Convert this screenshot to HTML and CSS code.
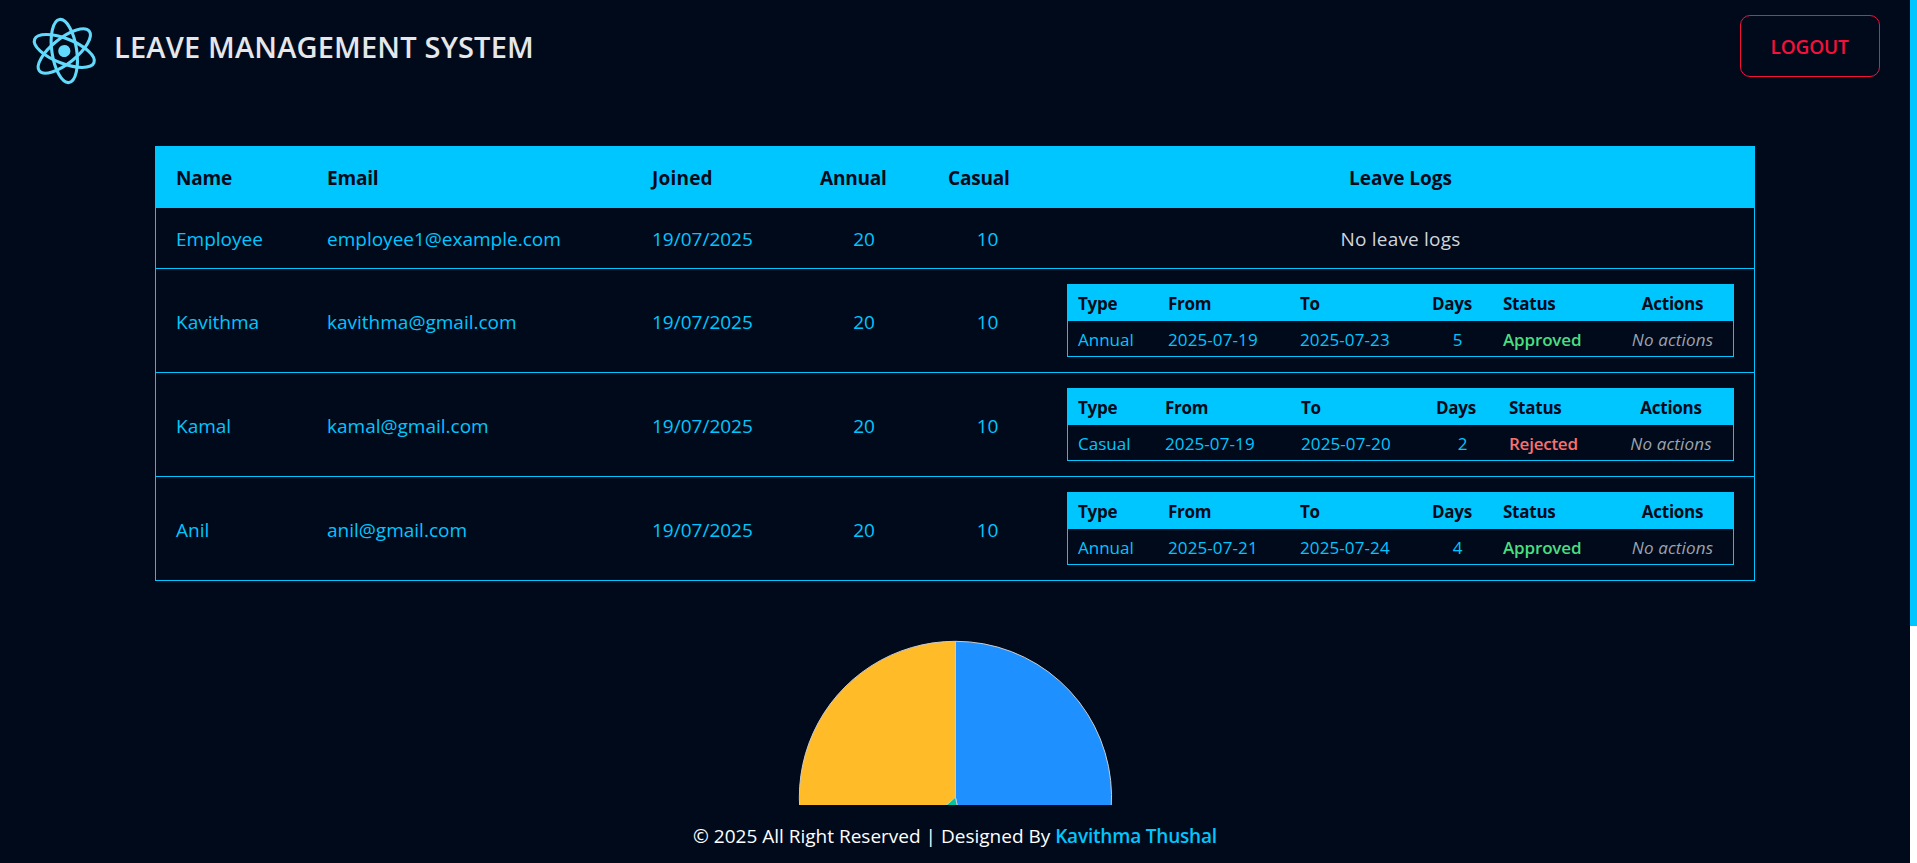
FILE: index.html
```html
<!DOCTYPE html>
<html lang="en">
<head>
<meta charset="utf-8">
<title>Leave Management System</title>
<link rel="stylesheet" href="styles.css">
</head>
<body>
<div class="page">
  <header class="topbar">
    <div class="brand">
      <svg class="logo" width="70" height="70" viewBox="-35.3 -35 70 70">
        <g transform="rotate(21.5)" fill="none" stroke="#61dafb" stroke-width="3.1">
          <circle r="6.1" fill="#61dafb" stroke="none"/>
          <ellipse rx="31.9" ry="12.4"/>
          <ellipse rx="31.9" ry="12.4" transform="rotate(60)"/>
          <ellipse rx="31.9" ry="12.4" transform="rotate(120)"/>
        </g>
      </svg>
      <h1 class="title">LEAVE MANAGEMENT SYSTEM</h1>
    </div>
    <button class="logout">LOGOUT</button>
  </header>

  <main class="content">
    <table class="employees">
      <colgroup><col class="c-name"><col class="c-email"><col class="c-joined"><col class="c-annual"><col class="c-casual"><col></colgroup>
      <thead>
        <tr><th>Name</th><th>Email</th><th class="joined">Joined</th><th>Annual</th><th>Casual</th><th class="center">Leave Logs</th></tr>
      </thead>
      <tbody>
        <tr class="short"><td>Employee</td><td>employee1@example.com</td><td>19/07/2025</td><td class="center">20</td><td class="center">10</td><td class="center empty">No leave logs</td></tr>
        <tr><td>Kavithma</td><td>kavithma@gmail.com</td><td>19/07/2025</td><td class="center">20</td><td class="center">10</td>
          <td class="logs-cell"><table class="logs annual">
            <colgroup><col class="l-type"><col class="l-from"><col class="l-to"><col class="l-days"><col class="l-status"><col></colgroup>
            <thead><tr><th>Type</th><th>From</th><th>To</th><th>Days</th><th>Status</th><th class="center">Actions</th></tr></thead>
            <tbody><tr><td>Annual</td><td class="date">2025-07-19</td><td class="date">2025-07-23</td><td class="center">5</td><td class="approved">Approved</td><td class="center none">No actions</td></tr></tbody>
          </table></td></tr>
        <tr><td>Kamal</td><td>kamal@gmail.com</td><td>19/07/2025</td><td class="center">20</td><td class="center">10</td>
          <td class="logs-cell"><table class="logs casual">
            <colgroup><col class="l-type"><col class="l-from"><col class="l-to"><col class="l-days"><col class="l-status"><col></colgroup>
            <thead><tr><th>Type</th><th>From</th><th>To</th><th>Days</th><th>Status</th><th class="center">Actions</th></tr></thead>
            <tbody><tr><td>Casual</td><td class="date">2025-07-19</td><td class="date">2025-07-20</td><td class="center">2</td><td class="rejected">Rejected</td><td class="center none">No actions</td></tr></tbody>
          </table></td></tr>
        <tr class="last"><td>Anil</td><td>anil@gmail.com</td><td>19/07/2025</td><td class="center">20</td><td class="center">10</td>
          <td class="logs-cell"><table class="logs annual">
            <colgroup><col class="l-type"><col class="l-from"><col class="l-to"><col class="l-days"><col class="l-status"><col></colgroup>
            <thead><tr><th>Type</th><th>From</th><th>To</th><th>Days</th><th>Status</th><th class="center">Actions</th></tr></thead>
            <tbody><tr><td>Annual</td><td class="date">2025-07-21</td><td class="date">2025-07-24</td><td class="center">4</td><td class="approved">Approved</td><td class="center none">No actions</td></tr></tbody>
          </table></td></tr>
      </tbody>
    </table>

    <svg class="chart" width="320" height="168" viewBox="795.1 637 320 168">
      <g stroke="#ccc" stroke-width="1">
        <path fill="#1e90ff" d="M955.5 797.3V641.3A156 156 0 0 1 989 949.7Z"/>
        <path fill="#ffbb28" d="M955.5 797.3L838 900A156 156 0 0 1 955.5 641.3Z"/>
        <path fill="#00c49f" d="M955.5 797.3L989 949.7A156 156 0 0 1 838 900Z"/>
      </g>
    </svg>
  </main>

  <footer class="footer">© 2025 All Right Reserved | Designed By <span class="author">Kavithma Thushal</span></footer>
</div>
<div class="scrollbar"><div class="thumb"></div></div>
</body>
</html>
```

FILE: styles.css
```css
* { box-sizing: border-box; }

body {
  margin: 0;
  height: 863px;
  display: flex;
  overflow: hidden;
  background: #000a1b;
  color: #00c6ff;
  font: 19px/28px "Open Sans", "Noto Sans", sans-serif;
}

.page {
  width: 1910px;
  display: flex;
  flex-direction: column;
}

.topbar {
  height: 92px;
  padding: 0 30px 0 29px;
  display: flex;
  justify-content: space-between;
  align-items: center;
}

.brand { display: flex; align-items: center; gap: 15px; padding-top: 9px; }
.logo { display: block; }
.title {
  margin: 0;
  padding-bottom: 8px;
  font-size: 29px;
  font-weight: 600;
  letter-spacing: 0.18px;
  color: #e5e7eb;
}

.logout {
  width: 140px;
  height: 62px;
  padding: 1px 1px 0 0;
  border: 1px solid #f5113c;
  border-radius: 10px;
  background: transparent;
  color: #f5113c;
  font: 600 19px/28px "Open Sans", "Noto Sans", sans-serif;
  letter-spacing: -0.15px;
}

.content {
  flex: 1;
  min-height: 0;
  padding-top: 54px;
  display: flex;
  flex-direction: column;
  align-items: center;
}

table { table-layout: fixed; border-spacing: 0; border: 1px solid #00c6ff; }
th { text-align: left; background: #00c6ff; color: #000a1b; font-weight: 700; }
td, th { padding: 0 20px; vertical-align: middle; white-space: nowrap; }
.center { text-align: center; }

.employees { width: 1600px; }
.employees > thead > tr { height: 61px; }
.employees > thead th { letter-spacing: -0.2px; }
.employees > thead .joined { letter-spacing: 0.2px; }
.employees > thead .center { letter-spacing: 0; }
.employees > tbody > tr { height: 104px; }
.employees > tbody > tr > td { border-bottom: 1px solid #00c6ff; padding-top: 2px; }
.employees > tbody > tr.short { height: 61px; }
.employees > tbody > tr.short > td { padding-top: 1px; }
.employees > tbody > tr.last { height: 103px; }
.employees > tbody > tr.last > td { border-bottom: 0; }
.c-name { width: 151px; }
.c-email { width: 325px; }
.c-joined { width: 168px; }
.c-annual { width: 128px; }
.c-casual { width: 119px; }
.employees .empty { color: #d1d5db; letter-spacing: 0.2px; }
.employees > tbody > tr > .logs-cell { padding-top: 0; }

.logs { width: 667px; font-size: 17px; line-height: 24px; }
.logs thead tr { height: 36px; }
.logs tbody tr { height: 35px; }
.logs th, .logs td { padding: 2px 10px 0; }
.logs thead th { letter-spacing: -0.25px; }
.logs .date { letter-spacing: 0.1px; }
.annual .l-type { width: 90px; }
.annual .l-from, .annual .l-to { width: 132px; }
.annual .l-days { width: 71px; }
.annual .l-status { width: 119px; }
.casual .l-type { width: 87px; }
.casual .l-from { width: 136px; }
.casual .l-to { width: 135px; }
.casual .l-days { width: 73px; }
.casual .l-status { width: 110px; }
.approved { color: #4ade80; font-weight: 600; letter-spacing: -0.15px; }
.rejected { color: #f87171; font-weight: 600; letter-spacing: -0.25px; }
.none { color: #9ca3af; font-style: italic; letter-spacing: 0.15px; }

.chart { display: block; margin-top: 56px; flex: none; }

.footer {
  height: 58px;
  padding-top: 17px;
  text-align: center;
  color: #fff;
}
.author { color: #00c6ff; font-weight: 600; letter-spacing: -0.19px; }

.scrollbar { width: 7px; background: #fff; }
.thumb { height: 626px; background: #00c6ff; }
```
